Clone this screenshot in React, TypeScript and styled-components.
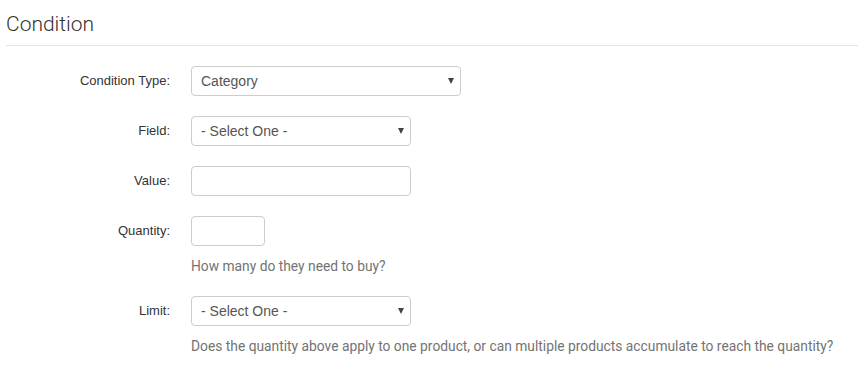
import React from 'react';
import styled, {createGlobalStyle} from 'styled-components';

const GlobalStyle = createGlobalStyle`
  body {
    margin: 0;
    background: #FFFFFF;
    font-family: "Liberation Sans", Arial, sans-serif;
  }
`;

const StyledPage = styled.div`
  padding: 0 1px 0 6px;
`;
const StyledHeading = styled.h2`
  margin: 0;
  padding: 12px 0 9px 0;
  font-family: Roboto, "Open Sans", sans-serif;
  font-weight: 300;
  font-size: 21px;
  line-height: 24px;
  color: #333333;
  border-bottom: 1px solid #E5E5E5;
`;
const StyledForm = styled.form`
  padding-top: 20px;
`;
const StyledRow = styled.div`
  display: flex;
  margin-bottom: 20px;
`;
const StyledLabel = styled.label`
  width: 164px;
  flex-shrink: 0;
  height: 30px;
  line-height: 30px;
  text-align: right;
  padding-right: 21px;
  font-size: 13px;
  color: #333333;
`;
const StyledControlCol = styled.div`
  display: flex;
  flex-direction: column;
`;
const StyledSelectWrap = styled.div<{ $width: number }>`
  position: relative;
  width: ${p => p.$width}px;
`;
const StyledSelect = styled.select`
  appearance: none;
  width: 100%;
  height: 30px;
  padding: 0 24px 0 9px;
  border: 1px solid #CCCCCC;
  border-radius: 4px;
  background: #FFFFFF;
  font-family: "Liberation Sans", Arial, sans-serif;
  font-size: 14px;
  color: #555555;
  outline: none;
`;
const StyledCaret = styled.span`
  position: absolute;
  right: 7px;
  top: 12px;
  width: 0;
  height: 0;
  border-left: 3px solid transparent;
  border-right: 3px solid transparent;
  border-top: 6px solid #444444;
  pointer-events: none;
`;
const StyledInput = styled.input<{ $width: number }>`
  box-sizing: border-box;
  width: ${p => p.$width}px;
  height: 30px;
  padding: 0 10px;
  border: 1px solid #CCCCCC;
  border-radius: 4px;
  font-size: 14px;
  color: #555555;
  outline: none;
`;
const StyledHelp = styled.div`
  margin-top: 10px;
  font-family: Roboto, "Open Sans", sans-serif;
  font-size: 13.8px;
  line-height: 20px;
  color: #737373;
  white-space: nowrap;
`;

const Select = (props: { width: number; value: string; options: string[] }) => (
  <StyledSelectWrap $width={props.width}>
    <StyledSelect defaultValue={props.value}>
      {props.options.map((o) => <option key={o}>{o}</option>)}
    </StyledSelect>
    <StyledCaret />
  </StyledSelectWrap>
);

const App = () => {
  const selectOne = ['- Select One -'];
  return (
    <StyledPage>
      <GlobalStyle />
      <StyledHeading>Condition</StyledHeading>
      <StyledForm>
        <StyledRow>
          <StyledLabel>Condition Type:</StyledLabel>
          <Select width={270} value='Category' options={['Category', 'Product', 'Brand']} />
        </StyledRow>
        <StyledRow>
          <StyledLabel>Field:</StyledLabel>
          <Select width={220} value='- Select One -' options={selectOne} />
        </StyledRow>
        <StyledRow>
          <StyledLabel>Value:</StyledLabel>
          <StyledInput $width={220} type='text' />
        </StyledRow>
        <StyledRow>
          <StyledLabel>Quantity:</StyledLabel>
          <StyledControlCol>
            <StyledInput $width={74} type='text' />
            <StyledHelp>How many do they need to buy?</StyledHelp>
          </StyledControlCol>
        </StyledRow>
        <StyledRow>
          <StyledLabel>Limit:</StyledLabel>
          <StyledControlCol>
            <Select width={220} value='- Select One -' options={selectOne} />
            <StyledHelp>Does the quantity above apply to one product, or can multiple products accumulate to reach the quantity?</StyledHelp>
          </StyledControlCol>
        </StyledRow>
      </StyledForm>
    </StyledPage>
  );
}

export default App;
